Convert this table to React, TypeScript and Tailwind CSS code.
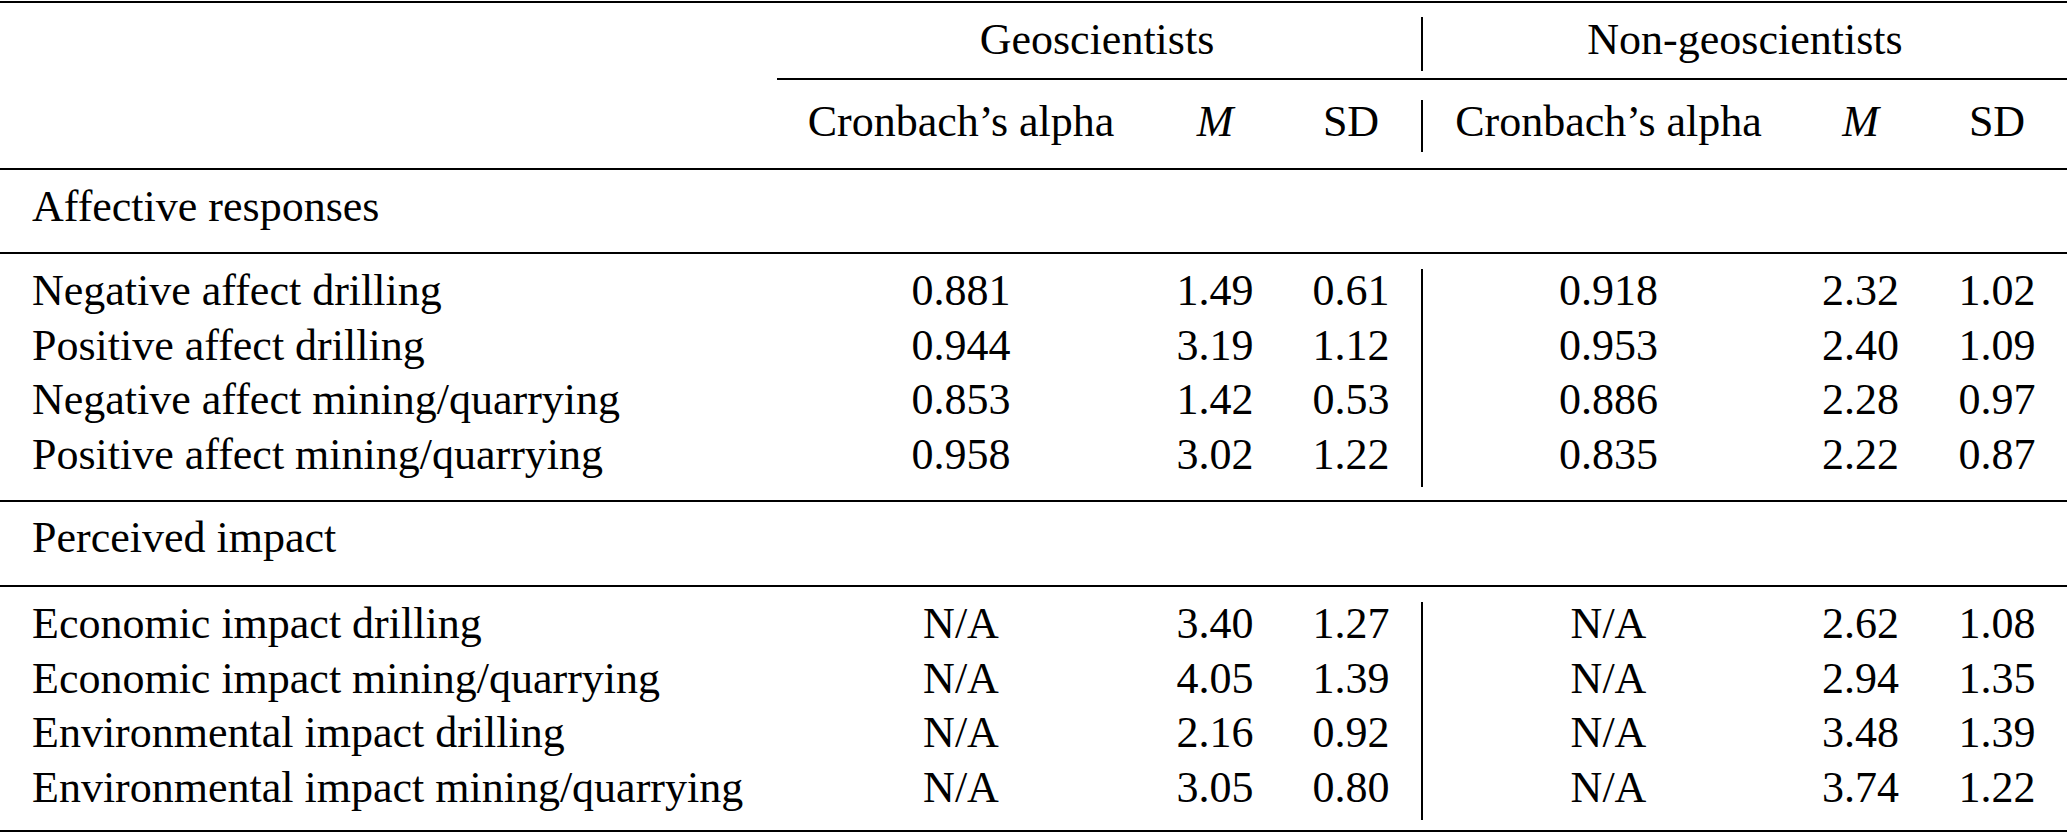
import React from "react";

/* Column grid: label | geo alpha | geo M | geo SD | non alpha | non M | non SD */
const COLS = "grid grid-cols-[773px_376px_132px_140px_373px_133px_140px]";

type Row = {
  label: string;
  geo: [string, string, string];
  non: [string, string, string];
};

const AFFECTIVE: Row[] = [
  { label: "Negative affect drilling", geo: ["0.881", "1.49", "0.61"], non: ["0.918", "2.32", "1.02"] },
  { label: "Positive affect drilling", geo: ["0.944", "3.19", "1.12"], non: ["0.953", "2.40", "1.09"] },
  { label: "Negative affect mining/quarrying", geo: ["0.853", "1.42", "0.53"], non: ["0.886", "2.28", "0.97"] },
  { label: "Positive affect mining/quarrying", geo: ["0.958", "3.02", "1.22"], non: ["0.835", "2.22", "0.87"] },
];

const IMPACT: Row[] = [
  { label: "Economic impact drilling", geo: ["N/A", "3.40", "1.27"], non: ["N/A", "2.62", "1.08"] },
  { label: "Economic impact mining/quarrying", geo: ["N/A", "4.05", "1.39"], non: ["N/A", "2.94", "1.35"] },
  { label: "Environmental impact drilling", geo: ["N/A", "2.16", "0.92"], non: ["N/A", "3.48", "1.39"] },
  { label: "Environmental impact mining/quarrying", geo: ["N/A", "3.05", "0.80"], non: ["N/A", "3.74", "1.22"] },
];

const Rule: React.FC = () => <div className="h-[2px] bg-black" />;

const DataRow: React.FC<{ row: Row }> = ({ row }) => (
  <div className={COLS}>
    <div className="pl-[32px] pt-[2px] pb-[12.5px] leading-[40px] whitespace-nowrap">{row.label}</div>
    {row.geo.map((v, i) => (
      <div key={`g${i}`} className="pt-[2px] pb-[12.5px] leading-[40px] text-center">
        {v}
      </div>
    ))}
    {row.non.map((v, i) => (
      <div
        key={`n${i}`}
        className={`pt-[2px] pb-[12.5px] leading-[40px] text-center ${i === 0 ? "border-l-2 border-black" : ""}`}
      >
        {v}
      </div>
    ))}
  </div>
);

const SubHead: React.FC<{ first?: boolean }> = ({ first }) => (
  <>
    <div className={`h-[52px] leading-[44px] text-center whitespace-nowrap ${first ? "border-l-2 border-black" : ""}`}>
      Cronbach’s alpha
    </div>
    <div className="h-[52px] leading-[44px] text-center italic">M</div>
    <div className="h-[52px] leading-[44px] text-center">SD</div>
  </>
);

const Section: React.FC<{ title: string; top: string; bottom: string }> = ({ title, top, bottom }) => (
  <div className={`pl-[32px] leading-[48px] ${top} ${bottom}`}>{title}</div>
);

export default function App() {
  return (
    <div className="min-h-screen w-[2067px] bg-white text-black text-[44px] font-serif">
      <div className="pt-[1px] [font-family:'Liberation_Serif','Times_New_Roman',serif]">
        <Rule />

        {/* Group headers */}
        <div className={`${COLS} pt-[14px] pb-[7px]`}>
          <div />
          <div className="col-span-3 h-[54px] leading-[46px] text-center">Geoscientists</div>
          <div className="col-span-3 h-[54px] leading-[46px] text-center border-l-2 border-black">
            Non-geoscientists
          </div>
        </div>

        {/* partial rule under group headers */}
        <div className={COLS}>
          <div />
          <div className="col-span-6 ml-[4px] h-[2px] bg-black" />
        </div>

        {/* Sub headers */}
        <div className={`${COLS} pt-[20px] pb-[16px]`}>
          <div />
          <SubHead />
          <SubHead first />
        </div>
        <Rule />

        <Section title="Affective responses" top="pt-[13px]" bottom="pb-[21px]" />
        <Rule />
        <div className="pt-[15px] pb-[13px]">
          {AFFECTIVE.map((r) => (
            <DataRow key={r.label} row={r} />
          ))}
        </div>
        <Rule />

        <Section title="Perceived impact" top="pt-[12px]" bottom="pb-[23px]" />
        <Rule />
        <div className="pt-[15px] pb-[10px]">
          {IMPACT.map((r) => (
            <DataRow key={r.label} row={r} />
          ))}
        </div>
        <Rule />
      </div>
    </div>
  );
}
